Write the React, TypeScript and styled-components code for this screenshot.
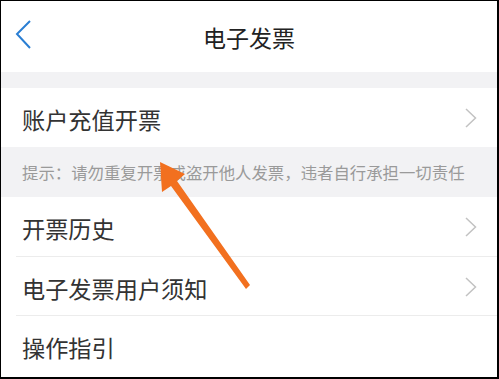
import React from "react";
import styled, { createGlobalStyle } from "styled-components";

const Global = createGlobalStyle`
  html, body { margin: 0; padding: 0; background: #fff; }
  body { font-family: "Noto Sans CJK SC", "Noto Sans", sans-serif; }
  * { box-sizing: border-box; }
`;

const Frame = styled.div`
  position: relative;
  width: 499px;
  height: 379px;
  overflow: hidden;
  background: #fff;
  border-style: solid;
  border-color: #000;
  border-width: 1px 2px 2px 1px;
  display: flex;
  flex-direction: column;
`;

const Header = styled.header`
  height: 71px;
  flex: none;
  display: flex;
  align-items: center;
  justify-content: center;
  position: relative;
  background: #fff;
`;

const BackBtn = styled.div`
  position: absolute;
  left: 13px;
  top: 18px;
  width: 20px;
  height: 32px;
  display: flex;
`;

const Title = styled.h1`
  margin: 0;
  font-size: 23px;
  font-weight: 400;
  color: #222;
  letter-spacing: 0;
`;

const Band = styled.div<{ $h: number }>`
  height: ${(p) => p.$h}px;
  flex: none;
  background: #f2f2f4;
  display: flex;
  align-items: center;
  padding-left: 21px;
`;

const Tip = styled.span`
  font-size: 16.4px;
  color: #9a9a9a;
  white-space: nowrap;
`;

const Row = styled.div<{ $h: number; $divider?: boolean }>`
  height: ${(p) => p.$h}px;
  flex: none;
  display: flex;
  align-items: center;
  justify-content: space-between;
  padding: 0 20px 0 21px;
  background: #fff;
  position: relative;
  ${(p) =>
    p.$divider
      ? `&::after { content: ""; position: absolute; left: 15px; right: 0; bottom: 0; height: 1px; background: #ececec; }`
      : ""}
`;

const Label = styled.span`
  font-size: 23.2px;
  color: #333;
  padding-top: 2px;
`;

const Chevron = styled.svg`
  width: 12px;
  height: 20px;
  flex: none;
`;

const Arrow = styled.svg`
  position: absolute;
  left: 0;
  top: 0;
  pointer-events: none;
`;

const RightChevron = () => (
  <Chevron viewBox="0 0 12 20">
    <polyline points="1,1 10.5,10 1,19" fill="none" stroke="#c2c2c2" strokeWidth="1.5" />
  </Chevron>
);

export default function App() {
  return (
    <>
      <Global />
      <Frame>
        <Header>
          <BackBtn>
            <svg width="20" height="32" viewBox="0 0 20 32">
              <polyline points="16,2 3,15 16,29" fill="none" stroke="#2a7ed3" strokeWidth="2" />
            </svg>
          </BackBtn>
          <Title>电子发票</Title>
        </Header>
        <Band $h={16} />
        <Row $h={59}>
          <Label>账户充值开票</Label>
          <RightChevron />
        </Row>
        <Band $h={50}>
          <Tip>提示：请勿重复开票或盗开他人发票，违者自行承担一切责任</Tip>
        </Band>
        <Row $h={60} $divider>
          <Label>开票历史</Label>
          <RightChevron />
        </Row>
        <Row $h={59} $divider>
          <Label>电子发票用户须知</Label>
          <RightChevron />
        </Row>
        <Row $h={60}>
          <Label>操作指引</Label>
        </Row>
        <Arrow width="499" height="379" viewBox="0 0 499 379">
          <polygon
            points="159,161 184,173 176,180 249,284 245,288 170,185 161,191"
            fill="#f2701f"
          />
        </Arrow>
      </Frame>
    </>
  );
}
